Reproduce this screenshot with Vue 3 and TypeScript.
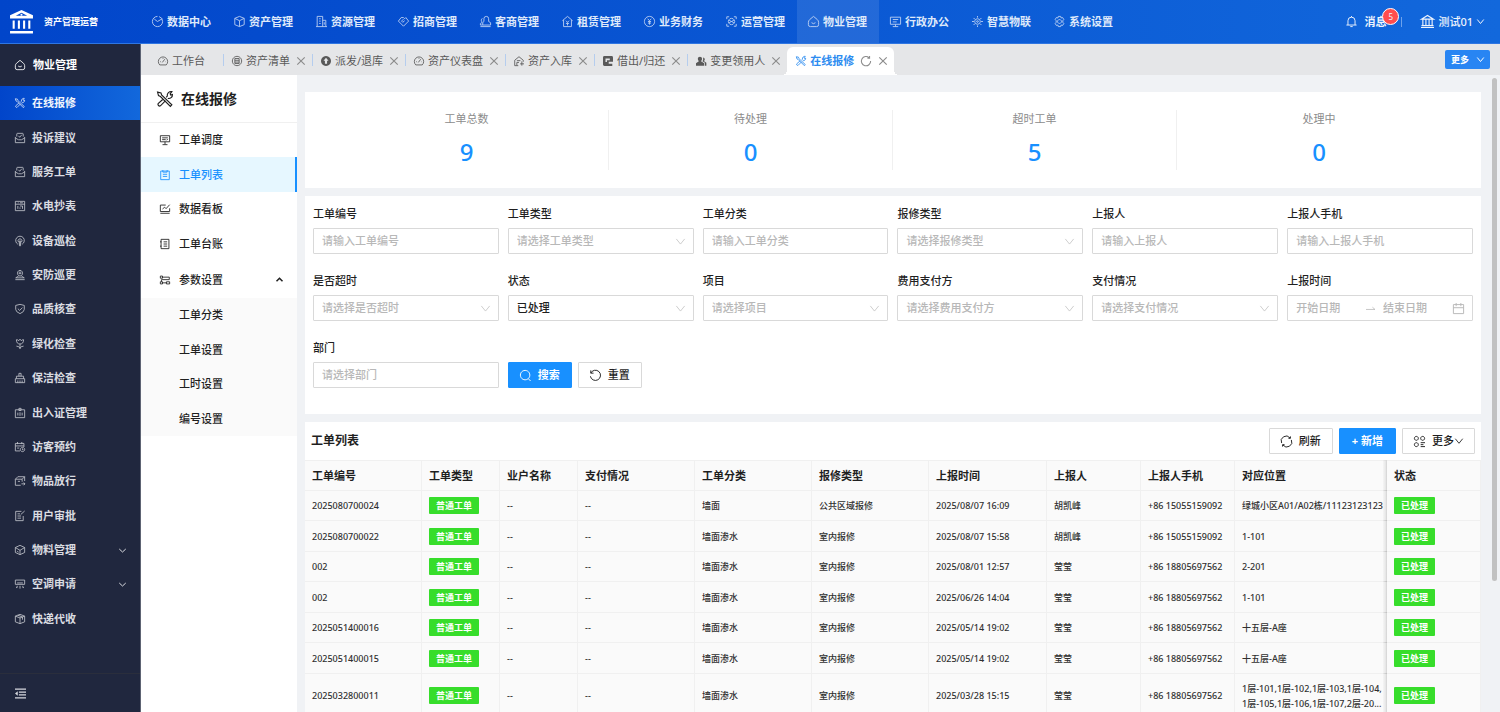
<script setup lang="ts">
import { ref } from 'vue'

interface MenuItem { icon: string; label: string; expandable?: boolean }
interface TabItem { icon: string; label: string; closable: boolean; solid?: boolean; active?: boolean }
interface Field { id: string; label: string; hint: string; kind: 'text' | 'select' | 'range'; value?: string }
interface Order { no: string; category: string; repair: string; time: string; person: string; phone: string; place: string }

const icons: Record<string, string> = {
  bank: 'M1.500 5.500 8 1.500l6.500 4zM1 14.500h14M3 6v6.500M6.300 6v6.500M9.700 6v6.500M13 6v6.500M1.500 12.500h13',
  pie: 'M8 1.500a6.500 6.500 0 1 0 6.500 6.500M8 8 4 5M8 8l6-3.500M10 1.700a6.500 6.500 0 0 1 4.500 6.300',
  cube: 'M8 1.500 14 4v8l-6 2.500L2 12V4zM2 4l6 3 6-3M8 7v7.500',
  building: 'M2.500 14.500v-13h7v13M9.500 6.500h4v8M1 14.500h14M5 4.500h2M5 7.500h2M5 10.500h2M11.500 9v3',
  tag: 'M8 14 1.500 7.500 5 3h3l1.500 1.500L11 3l3.500 4.500zM8 5 5.500 7.500 7 9l2.500-2',
  client: 'M6 8V4.500a3 3 0 0 1 6 0V8l2.500 1.500v3h-10v-3zM4 4a3 3 0 0 0 0 5L1.500 10.500v2h3M1.500 14.500h13',
  house: 'M1.500 7 8 1.500 14.500 7M3 6v8.500h10V6M6 7l2 2 2-2M8 9v4M6 10.500h4',
  coin: 'M8 1.500a6.500 6.500 0 1 0 .01 0M5.700 4.500 8 7l2.300-2.500M8 7v5M6 8h4M6 10h4',
  operate: 'M2 5V2h3M11 2h3v3M14 11v3h-3M5 14H2v-3M8 4a4 4 0 1 0 .01 0M5 6.500 11 9.500M11 6.500 5 9.500',
  estate: 'M3.200 5.500 8 1.500l4.800 4A5 5 0 0 1 14.500 9v3q0 2.500-2.500 2.500H4q-2.500 0-2.500-2.500V9a5 5 0 0 1 1.700-3.500M5.500 9.500q2.500 2.500 5 0',
  monitor: 'M1.500 2.500h13v9h-13zM8 11.500v3M4.500 14.500h7M4.500 5.500h7M4.500 8.500h5',
  iot: 'M8 4.500a3.500 3.500 0 1 0 .01 0M8 7a1 1 0 1 0 .01 0M8 1v2M8 13v2M1 8h2.500M12.500 8H15M3 3.500l2 2M11 10.500l2 2M13 3.500l-2 2M5 10.500l-2 2',
  gear: 'M8 5.500a2.500 2.500 0 1 0 .01 0M6.500 1.500h3l.5 2 2-.5 1.500 2.500-1.300 1.500v2l1.300 1.500-1.500 2.500-2-.5-.5 2h-3l-.5-2-2 .5-1.500-2.500 1.300-1.500V7L2.500 5.500 4 3l2 .5z',
  bell: 'M1.500 12.500h13M3.500 12.500V7a4.500 4.500 0 0 1 9 0v5.500M8 1v1.500M6.500 14.500h3',
  tools: 'M1.500 2 4.500 2.700 5 4.500 14 13 12.700 14.500 4 5.800 2.300 5zM9 6.500l1-1A3.500 3.500 0 0 1 14 1.500L12.500 3.500l.5 1 1.500-.5a3.300 3.300 0 0 1-4 3.500M6.500 8 2 12a1.500 1.500 0 0 0 2 2L8.500 9.500',
  mail: 'M3.500 6V2.500Q3.500 1.500 4.500 1.500h7q1 0 1 1V6M1.500 6.500v8h13v-8M1.500 8 6 10.500h4L14.500 8M6 5l1.500 2L10.500 3.500',
  meter: 'M1.500 1.500h13v13h-13zM1.500 5.500h13M5 3.500h1M8 3.500h4M5 8v4M8 10v2M8 8h3.500v4',
  patrol: 'M5 12.500A6 6 0 1 1 11 12.500M6 9.500A2.700 2.700 0 1 1 10 9.500M8 7v7M6.500 14.500h3M7 9h2v4H7z',
  guard: 'M8 1.500A3.500 4 0 1 0 8.010 1.500M6 5.500h4M8 3v4M6 9.500 2 12h12l-4-2.500M1.500 14.500h13',
  shield: 'M8 1.500 14 3v5.500q0 3.500-6 6-6-2.500-6-6V3zM5 7.500 7.500 10 11.500 6',
  flower: 'M8 8V15M8 8Q3 8 3 2q2-.5 3 1.500Q7 1.500 8 1.500t2 2Q11 1.500 13 2q0 6-5 6M3 11q4 0 5 3M13 11q-4 0-5 3',
  clean: 'M6.500 5.500v-4h3v4M3 9V5.500h10V9M1.500 9h13v5.500h-13zM5 11.500v3M8 11.500v3M11 11.500v3',
  pass: 'M1.500 3.500h13v11h-13zM6.500 1.500h3v3h-3zM5 7.500v4M8 7v5M11 7.500v4',
  visitor: 'M1.500 3h12v5M1.500 3v10.500H8M1.500 6.500h12M4.500 1v3M10.500 1v3M4 9.500h3M11.500 8.500a3 3 0 1 0 .01 0M11.500 10v2h1.500',
  goods: 'M11 9V5.500H1.500v8.500H9M1.500 5.500 5 2h9.500L11 5.500M14.500 2v6M5 8.500h3M10 12H15M13 10l2 2-2 2',
  audit: 'M12.500 8v6.500H2V1.500h8M4.500 5H8M4.500 8h5M4.500 11h5M9 6l5.500-5',
  box: 'M8 1.500 14.500 4.500v7L8 14.500 1.500 11.500v-7zM1.500 4.500 8 8.500l6.500-4M8 8.500v6M4 10l2 1',
  aircon: 'M1.500 2.500h13v6h-13zM4 6.500h8M4 10.500v2.500H2.500M8 10.500v4M12 10.500v2.500h1.500',
  parcel: 'M8 1.500 14.500 4v8L8 14.500 1.500 12V4zM1.500 4 8 6.500 14.500 4M8 6.500v8M5 2.700l6.500 2.500V9',
  gauge: 'M3.500 13.500a6.500 6.500 0 1 1 9 0zM7 10l3.500-4.500M4 9h1M11.500 9h.5M8 4v1',
  list: 'M8 1.500a6.500 6.500 0 1 0 .01 0M5 4.500h6v7H5zM5 7h6M5 9.500h6',
  store: 'M7 14.500H2V7L8 2l6 5v2M5 14v-4h3M12 8.500v6M9.500 12H15M5 7.500h5',
  dispatch: 'M1.500 2h13v8.500h-13zM4 5h8M4 7.500h5M10 8.500l2-2M8 10.500v3.500M4.500 14.500h7',
  orders: 'M2 2.500h12v12H2zM5 1v3h6V1M5 7h6M5 10h6',
  board: 'M9 2.500H1.500v9h13V7M4.500 8l3-2.500 2 2L14.500 2M1.500 14h13',
  ledger: 'M2.500 1.500h11v13h-11zM1 5h2M1 11h2M6 5h5M6 8h5M6 11h5',
  params: 'M1.500 2.500h3v3h-3zM4.500 4H14M1.500 10.500h3v3h-3zM4.500 12H10M10 10.500h4.500v3H10zM14 4v3.500H3v3',
  search: 'M7.500 1.500a6 6 0 1 0 .01 0M11.500 12l3 3',
  undo: 'M2 5a6.500 6.500 0 1 1-.5 4M2 1.500V5h3.500',
  refresh: 'M1.800 10A6.300 6.300 0 0 1 12.500 3.500M14.200 6A6.300 6.300 0 0 1 3.500 12.500M10.500 4h2.500V1.500M5.500 12H3v2.500',
  reload: 'M12.500 3.500a6.500 6.500 0 1 0 2 4.500M13 1v3H10',
  grid: 'M4 1.500a2.500 2.500 0 1 0 .01 0M12 1.500a2.500 2.500 0 1 0 .01 0M4 9.500a2.500 2.500 0 1 0 .01 0M9.500 9.500H15M9.500 12H13M9.500 14.500H15',
  down: 'M1.500 4 8 12l6.500-8',
  up: 'M2 11.500 8 5.500l6 6',
  close: 'M1.500 1.500l13 13M14.500 1.500l-13 13',
  swap: 'M1 9.500h14L11 6',
  calendar: 'M1.500 3h13v11.500h-13zM1.500 7h13M5 1v4M11 1v4',
  give: 'M8 1a7 7 0 1 0 .01 0M8 3.500l3.500 4H9.500V12h-3V7.500h-2z',
  lend: 'M3 1h10q2 0 2 2v6H9v3h5v3H3q-2 0-2-2V3q0-2 2-2M4.500 4.500v5h2V7h4V4.500z',
  people: 'M6.500 2a3 3 0 0 1 3 3q0 2-1.500 3.500L12.500 11v3.500H1V11l4-2.500Q3.500 7 3.500 5a3 3 0 0 1 3-3M11 3a2.700 2.700 0 0 1 1 5l3.500 2.500v4h-2V10.500L10 8.500Q11.500 6 11 3',
}

const topNav: MenuItem[] = [
  { icon: 'pie', label: '数据中心' }, { icon: 'cube', label: '资产管理' },
  { icon: 'building', label: '资源管理' }, { icon: 'tag', label: '招商管理' },
  { icon: 'client', label: '客商管理' }, { icon: 'house', label: '租赁管理' },
  { icon: 'coin', label: '业务财务' }, { icon: 'operate', label: '运营管理' },
  { icon: 'estate', label: '物业管理' }, { icon: 'monitor', label: '行政办公' },
  { icon: 'iot', label: '智慧物联' }, { icon: 'gear', label: '系统设置' },
]

const sideNav: MenuItem[] = [
  { icon: 'tools', label: '在线报修' }, { icon: 'mail', label: '投诉建议' },
  { icon: 'mail', label: '服务工单' }, { icon: 'meter', label: '水电抄表' },
  { icon: 'patrol', label: '设备巡检' }, { icon: 'guard', label: '安防巡更' },
  { icon: 'shield', label: '品质核查' }, { icon: 'flower', label: '绿化检查' },
  { icon: 'clean', label: '保洁检查' }, { icon: 'pass', label: '出入证管理' },
  { icon: 'visitor', label: '访客预约' }, { icon: 'goods', label: '物品放行' },
  { icon: 'audit', label: '用户审批' }, { icon: 'box', label: '物料管理', expandable: true },
  { icon: 'aircon', label: '空调申请', expandable: true }, { icon: 'parcel', label: '快递代收' },
]

const tabs: TabItem[] = [
  { icon: 'gauge', label: '工作台', closable: false },
  { icon: 'list', label: '资产清单', closable: true },
  { icon: 'give', label: '派发/退库', closable: true, solid: true },
  { icon: 'gauge', label: '资产仪表盘', closable: true },
  { icon: 'store', label: '资产入库', closable: true },
  { icon: 'lend', label: '借出/归还', closable: true, solid: true },
  { icon: 'people', label: '变更领用人', closable: true, solid: true },
  { icon: 'tools', label: '在线报修', closable: true, active: true },
]

const subNav: MenuItem[] = [
  { icon: 'dispatch', label: '工单调度' }, { icon: 'orders', label: '工单列表' },
  { icon: 'board', label: '数据看板' }, { icon: 'ledger', label: '工单台账' },
]
const paramNav: string[] = ['工单分类', '工单设置', '工时设置', '编号设置']
const paramsOpen = ref(true)

const stats = [
  { label: '工单总数', value: 9 }, { label: '待处理', value: 0 },
  { label: '超时工单', value: 5 }, { label: '处理中', value: 0 },
]

const fields = ref<Field[]>([
  { id: 'order-no', label: '工单编号', hint: '请输入工单编号', kind: 'text' },
  { id: 'order-type', label: '工单类型', hint: '请选择工单类型', kind: 'select' },
  { id: 'order-class', label: '工单分类', hint: '请输入工单分类', kind: 'text' },
  { id: 'repair-type', label: '报修类型', hint: '请选择报修类型', kind: 'select' },
  { id: 'reporter', label: '上报人', hint: '请输入上报人', kind: 'text' },
  { id: 'reporter-phone', label: '上报人手机', hint: '请输入上报人手机', kind: 'text' },
  { id: 'overtime', label: '是否超时', hint: '请选择是否超时', kind: 'select' },
  { id: 'status', label: '状态', hint: '请选择状态', kind: 'select', value: '已处理' },
  { id: 'project', label: '项目', hint: '请选择项目', kind: 'select' },
  { id: 'payer', label: '费用支付方', hint: '请选择费用支付方', kind: 'select' },
  { id: 'payment', label: '支付情况', hint: '请选择支付情况', kind: 'select' },
  { id: 'report-time', label: '上报时间', hint: '开始日期', kind: 'range' },
  { id: 'department', label: '部门', hint: '请选择部门', kind: 'text' },
])

const columns: string[] = ['工单编号', '工单类型', '业户名称', '支付情况', '工单分类', '报修类型', '上报时间', '上报人', '上报人手机', '对应位置', '状态']

const hu = '胡凯峰'
const ying = '莹莹'
const huPhone = '+86 15055159092'
const yingPhone = '+86 18805697562'
const orders: Order[] = [
  { no: '2025080700024', category: '墙面', repair: '公共区域报修', time: '2025/08/07 16:09', person: hu, phone: huPhone, place: '绿城小区A01/A02栋/11123123123' },
  { no: '2025080700022', category: '墙面渗水', repair: '室内报修', time: '2025/08/07 15:58', person: hu, phone: huPhone, place: '1-101' },
  { no: '002', category: '墙面渗水', repair: '室内报修', time: '2025/08/01 12:57', person: ying, phone: yingPhone, place: '2-201' },
  { no: '002', category: '墙面渗水', repair: '室内报修', time: '2025/06/26 14:04', person: ying, phone: yingPhone, place: '1-101' },
  { no: '2025051400016', category: '墙面渗水', repair: '室内报修', time: '2025/05/14 19:02', person: ying, phone: yingPhone, place: '十五层-A座' },
  { no: '2025051400015', category: '墙面渗水', repair: '室内报修', time: '2025/05/14 19:02', person: ying, phone: yingPhone, place: '十五层-A座' },
  { no: '2025032800011', category: '墙面渗水', repair: '室内报修', time: '2025/03/28 15:15', person: ying, phone: yingPhone, place: '1层-101,1层-102,1层-103,1层-104,\n1层-105,1层-106,1层-107,2层-20...' },
]
</script>

<template>
  <div class="app">
    <header class="topbar">
      <div class="brand">
        <svg class="brand-logo" viewBox="0 0 24 24">
          <path d="M12 1 23 6v3H1V6zM1 21h22v2.500H1zM3.500 11h2v8h-2zM8.500 11h2v8h-2zM13.500 11h2v8h-2zM18.500 11h2v8h-2z" />
          <path class="brand-cut" d="M12 3.500 17.500 6.500h-11z" />
          <circle cx="12" cy="5.500" r="1" />
        </svg>
        <span class="brand-name">资产管理运营</span>
      </div>
      <nav class="top-nav">
        <a v-for="item in topNav" :key="item.label" href="#" :class="['top-link', { active: item.label === '物业管理' }]">
          <svg class="icon" viewBox="1 1 14 14"><path :d="icons[item.icon]" /></svg>
          <span>{{ item.label }}</span>
        </a>
      </nav>
      <div class="account">
        <button class="message">
          <svg class="icon bell" viewBox="1 1 14 14"><path :d="icons.bell" /></svg>
          <span>消息</span>
          <span class="badge">5</span>
        </button>
        <button class="user">
          <svg class="icon user-icon" viewBox="1 1 14 14"><path :d="icons.bank" /></svg>
          <span>测试01</span>
          <svg class="icon chevron" viewBox="1 1 14 14"><path :d="icons.down" /></svg>
        </button>
      </div>
    </header>

    <div class="body">
      <aside class="sidebar">
        <div class="side-head">
          <svg class="icon" viewBox="1 1 14 14"><path :d="icons.estate" /></svg>
          <span>物业管理</span>
        </div>
        <ul class="side-list">
          <li v-for="(item, i) in sideNav" :key="item.label">
            <a href="#" :class="['side-link', { active: i === 0 }]">
              <svg class="icon" viewBox="1 1 14 14"><path :d="icons[item.icon]" /></svg>
              <span>{{ item.label }}</span>
              <svg v-if="item.expandable" class="icon side-arrow" viewBox="1 1 14 14"><path d="M1.500 5 8 11l6.500-6" /></svg>
            </a>
          </li>
        </ul>
        <button class="collapse" aria-label="收起菜单">
          <svg viewBox="1 1 14 14"><path d="M1 1.500h14v1.600H1zM6 5.300h9v1.600H6zM6 9h9v1.600H6zM1 12.900h14v1.600H1zM4.500 5v6L1 8z" /></svg>
        </button>
      </aside>

      <div class="workspace">
        <div class="tabbar">
          <div v-for="tab in tabs" :key="tab.label" :class="['tab', { active: tab.active, home: !tab.closable }]">
            <svg :class="['icon', { solid: tab.solid }]" viewBox="1 1 14 14"><path fill-rule="evenodd" :d="icons[tab.icon]" /></svg>
            <span>{{ tab.label }}</span>
            <button v-if="tab.active" class="tab-btn tab-reload" aria-label="刷新标签">
              <svg class="icon" viewBox="1 1 14 14"><path :d="icons.reload" /></svg>
            </button>
            <button v-if="tab.closable" class="tab-btn" aria-label="关闭标签">
              <svg class="icon" viewBox="1 1 14 14"><path :d="icons.close" /></svg>
            </button>
          </div>
          <button class="tab-more">更多<svg class="icon" viewBox="1 1 14 14"><path :d="icons.down" /></svg></button>
        </div>

        <div class="panes">
          <aside class="subpanel">
            <h1 class="sub-title">
              <svg class="icon" viewBox="1 1 14 14"><path :d="icons.tools" /></svg>
              <span>在线报修</span>
            </h1>
            <ul class="sub-list">
              <li v-for="item in subNav" :key="item.label">
                <a href="#" :class="['sub-link', { active: item.label === '工单列表' }]">
                  <svg class="icon" viewBox="1 1 14 14"><path :d="icons[item.icon]" /></svg>
                  <span>{{ item.label }}</span>
                </a>
              </li>
            </ul>
            <button class="sub-link sub-toggle" :aria-expanded="paramsOpen" @click="paramsOpen = !paramsOpen">
              <svg class="icon" viewBox="1 1 14 14"><path :d="icons.params" /></svg>
              <span>参数设置</span>
              <svg class="icon sub-arrow" viewBox="1 1 14 14"><path :d="icons.up" /></svg>
            </button>
            <ul v-if="paramsOpen" class="sub-list nested">
              <li v-for="label in paramNav" :key="label"><a href="#" class="sub-link">{{ label }}</a></li>
            </ul>
          </aside>

          <main class="content">
            <section class="card stats">
              <div v-for="stat in stats" :key="stat.label" class="stat">
                <span class="stat-label">{{ stat.label }}</span>
                <span class="stat-value">{{ stat.value }}</span>
              </div>
            </section>

            <form class="card filters" @submit.prevent>
              <div v-for="field in fields" :key="field.id" class="field">
                <label :for="field.id">{{ field.label }}</label>
                <div v-if="field.kind === 'range'" class="control range">
                  <input :id="field.id" type="text" placeholder="开始日期" />
                  <svg class="icon swap" viewBox="1 1 14 14"><path :d="icons.swap" /></svg>
                  <input type="text" placeholder="结束日期" aria-label="结束日期" />
                  <svg class="icon" viewBox="1 1 14 14"><path :d="icons.calendar" /></svg>
                </div>
                <div v-else-if="field.kind === 'select'" class="control">
                  <select :id="field.id" :class="{ empty: !field.value }">
                    <option>{{ field.value ?? field.hint }}</option>
                  </select>
                  <svg class="icon caret" viewBox="1 1 14 14"><path :d="icons.down" /></svg>
                </div>
                <div v-else class="control">
                  <input :id="field.id" v-model="field.value" type="text" :placeholder="field.hint" />
                </div>
              </div>
              <div class="form-actions">
                <button type="submit" class="btn primary"><svg class="icon" viewBox="1 1 14 14"><path :d="icons.search" /></svg>搜索</button>
                <button type="reset" class="btn"><svg class="icon" viewBox="1 1 14 14"><path :d="icons.undo" /></svg>重置</button>
              </div>
            </form>

            <section class="card orders">
              <div class="orders-head">
                <h2>工单列表</h2>
                <div class="orders-actions">
                  <button class="btn"><svg class="icon" viewBox="1 1 14 14"><path :d="icons.refresh" /></svg>刷新</button>
                  <button class="btn primary add">+ 新增</button>
                  <button class="btn"><svg class="icon" viewBox="1 1 14 14"><path :d="icons.grid" /></svg><span class="more-label">更多<svg class="icon" viewBox="1 1 14 14"><path :d="icons.down" /></svg></span></button>
                </div>
              </div>
              <table>
                <colgroup>
                  <col class="c-wide" /><col class="c-slim" /><col class="c-slim" /><col class="c-wide" /><col class="c-wide" /><col class="c-wide" />
                  <col class="c-time" /><col class="c-mid" /><col class="c-mid" /><col class="c-place" /><col class="c-mid" />
                </colgroup>
                <thead>
                  <tr><th v-for="col in columns" :key="col">{{ col }}</th></tr>
                </thead>
                <tbody>
                  <tr v-for="(order, i) in orders" :key="i">
                    <td>{{ order.no }}</td>
                    <td><span class="pill">普通工单</span></td>
                    <td>--</td>
                    <td>--</td>
                    <td>{{ order.category }}</td>
                    <td>{{ order.repair }}</td>
                    <td>{{ order.time }}</td>
                    <td>{{ order.person }}</td>
                    <td>{{ order.phone }}</td>
                    <td>{{ order.place }}</td>
                    <td><span class="pill">已处理</span></td>
                  </tr>
                </tbody>
              </table>
            </section>
            <div class="scroll-thumb"></div>
          </main>
        </div>
      </div>
    </div>
  </div>
</template>

<style>
html, body { margin: 0; height: 100%; overflow: hidden; }
</style>

<style scoped>
.app, .app * { box-sizing: border-box; }
.app {
  display: flex;
  flex-direction: column;
  height: 100vh;
  overflow: hidden;
  font-family: "Noto Sans", "Noto Sans CJK SC", sans-serif;
  font-size: 11px;
  line-height: 18px;
  color: #1f1f1f;
}
button, input, select { font: inherit; color: inherit; margin: 0; padding: 0; border: 0; background: none; }
button { cursor: pointer; }
a { color: inherit; text-decoration: none; }
ul { list-style: none; margin: 0; padding: 0; }
h1, h2 { margin: 0; }
.icon { width: 11px; height: 11px; flex: none; fill: none; stroke: currentColor; stroke-width: 1.2; overflow: visible; }
.icon.solid { fill: currentColor; stroke: none; }

.topbar {
  display: flex;
  height: 44px;
  flex: none;
  color: #fff;
  font-weight: 700;
  background: linear-gradient(90deg, #0145ca, #1268dc);
  border-bottom: 1px solid #2f76e2;
}
.brand { display: flex; align-items: center; width: 141px; padding-left: 9px; gap: 10px; flex: none; }
.brand-logo { width: 25px; height: 25px; fill: #fff; }
.brand-cut { fill: #0248cc; }
.brand-name { font-size: 9px; font-weight: 700; }
.top-nav { display: flex; flex: none; }
.top-link { display: flex; align-items: center; gap: 4px; padding: 0 12px 0 11px; white-space: nowrap; color: #dfe9fa; }
.top-link .icon { opacity: .8; }
.top-link.active { background: rgba(255, 255, 255, .1); }
.account { display: flex; align-items: center; margin-left: auto; padding-right: 16px; color: #eef4fd; }
.message { display: flex; align-items: center; gap: 7px; position: relative; padding-right: 15px; border-right: 1px solid transparent; }
.message::after { content: ""; position: absolute; right: -1px; top: 4px; height: 10px; width: 1px; background: #6da2ec; }
.badge {
  position: absolute; left: 36px; top: -5px; width: 17px; height: 17px; border: 1px solid #fff; border-radius: 50%;
  background: #ff4d4f; font-size: 8px; line-height: 15px; text-align: center; font-weight: 400;
}
.user { display: flex; align-items: center; gap: 4px; margin-left: 19px; font-weight: 500; }
.user-icon { width: 13px; height: 13px; }
.chevron { width: 7px; height: 7px; stroke-width: 2; }

.body { display: flex; flex: 1; min-height: 0; }
.sidebar { display: flex; flex-direction: column; width: 141px; flex: none; background: #20273e; border-right: 1px solid #5d6373; color: #dadce1; font-weight: 700; }
.side-head { display: flex; align-items: center; gap: 8px; height: 42px; flex: none; padding-left: 15px; font-weight: 700; color: #fff; }
.side-list { display: flex; flex-direction: column; flex: 1; padding-bottom: 37px; }
.side-list li { display: flex; flex: 1; min-height: 30px; }
.side-link { display: flex; flex: 1; align-items: center; gap: 7px; padding: 0 14px 0 15px; }
.side-link .icon, .side-head .icon { width: 10px; height: 10px; }
.side-link > .icon:first-child { opacity: .85; }
.side-link.active { background: linear-gradient(90deg, #0145ca, #1268dc); color: #f0f5fd; }
.side-link .side-arrow { width: 7px; height: 7px; margin-left: auto; stroke-width: 2; }
.collapse { height: 39px; flex: none; border-top: 1px solid #2a2e3c; padding-left: 15px; text-align: left; }
.collapse svg { display: block; width: 11px; height: 11px; fill: #d5d8de; }

.workspace { display: flex; flex-direction: column; flex: 1; min-width: 0; }
.tabbar { display: flex; height: 31px; flex: none; background: #e5e6e8; padding-left: 8px; color: #595959; }
.tab { position: relative; display: flex; align-items: center; gap: 4px; padding: 3px 7px 0 9px; white-space: nowrap; }
.tab > .icon { width: 10px; height: 10px; }
.tab.home { padding-right: 18px; }
.tab:not(:first-child)::before { content: ""; position: absolute; left: 0; top: 10px; width: 1px; height: 12px; background: #b5cdee; }
.tab-btn { display: flex; margin-left: 3px; color: #8c8c8c; }
.tab-btn .icon { width: 8px; height: 8px; stroke-width: 2; }
.tab.active { margin-top: 3px; padding-top: 0; background: #fff; border-radius: 6px 6px 0 0; color: #2d8cf0; font-weight: 700; }
.tab.tab.active::before, .tab.active::after { content: ""; position: absolute; top: auto; bottom: 0; width: 5px; height: 5px; }
.tab.tab.active::before { left: -5px; background: radial-gradient(circle at 0 0, transparent 5px, #fff 5px); }
.tab.active::after { right: -5px; background: radial-gradient(circle at 100% 0, transparent 5px, #fff 5px); }
.tab.active .tab-reload .icon { width: 10px; height: 10px; stroke-width: 1.5; }
.tab-reload + .tab-btn { margin-left: 4px; }
.tab-more {
  display: flex; align-items: center; gap: 8px; align-self: flex-start; margin: 6px 10px 0 auto; height: 19px; padding: 0 6px;
  background: #2885f3; color: #fff; border-radius: 2px; font-size: 9px; font-weight: 700;
}
.tab-more .icon { width: 7px; height: 7px; stroke-width: 2; }

.panes { display: flex; flex: 1; min-height: 0; background: #f0f2f5; }
.subpanel { width: 156px; flex: none; background: #fff; }
.sub-title { display: flex; align-items: center; gap: 8px; height: 48px; padding-left: 16px; font-size: 14px; font-weight: 700; border-bottom: 1px solid #f0f0f0; }
.sub-title .icon { width: 16px; height: 16px; stroke-width: 1; }
.sub-link { display: flex; align-items: center; gap: 9px; width: 100%; height: 34px; padding-left: 19px; font-weight: 500; }
.sub-link .icon { width: 10px; height: 10px; }
li:nth-child(even) > .sub-link { height: 35px; }
.sub-link.active { background: #e6f7ff; color: #1890ff; border-right: 2px solid #1890ff; }
.sub-toggle { height: 37px; padding-right: 14px; }
.sub-link .sub-arrow { width: 7px; height: 7px; margin-left: auto; stroke-width: 3; }
.nested { background: #fafafa; }
.nested .sub-link { padding-left: 38px; }

.content { position: relative; display: flex; flex-direction: column; gap: 8px; flex: 1; min-width: 0; padding: 17px 19px 0 8px; overflow: hidden; }
.card { flex: none; background: #fff; }
.stats { display: grid; grid-template-columns: repeat(4, 1fr); padding: 18px 20px; }
.stat { display: flex; flex-direction: column; align-items: center; gap: 8px; height: 60px; border-right: 1px solid #f0f0f0; }
.stat:last-child { border-right: 0; }
.stat-label { color: #8c8c8c; }
.stat-value { font-size: 24px; line-height: 32px; font-weight: 500; color: #1890ff; }

.filters { display: grid; grid-template-columns: repeat(6, 1fr); gap: 18px 9px; padding: 9px 8px 26px; }
.field { display: flex; flex-direction: column; gap: 5px; min-width: 0; font-weight: 500; }
.control { position: relative; display: flex; align-items: center; height: 26px; border: 1px solid #d9d9d9; border-radius: 1px; background: #fff; }
.control input, .control select { flex: 1; width: 100%; min-width: 0; height: 24px; padding: 0 8px; outline: 0; appearance: none; }
.control input { padding-bottom: 2px; }
.control input::placeholder { color: #b8b8b8; opacity: 1; }
.control select.empty { color: #b8b8b8; }
.caret { position: absolute; right: 8px; top: 8px; width: 9px; height: 9px; color: #bfbfbf; pointer-events: none; }
.range { color: #b8b8b8; padding-right: 8px; }
.range .swap { width: 9px; height: 9px; }
.form-actions { display: flex; align-items: flex-end; gap: 6px; grid-column: span 2; }
.btn {
  display: flex; align-items: center; gap: 7px; height: 26px; padding: 0 11px; border: 1px solid #d9d9d9; border-radius: 1px;
  background: #fff; white-space: nowrap; font-weight: 500;
}
.btn.primary { border-color: #1890ff; background: #1890ff; color: #fff; font-weight: 700; }
.btn.add { padding: 0 12px; }

.orders-head { display: flex; align-items: center; height: 38px; padding: 0 6px; }
.orders-head h2 { font-size: 12px; font-weight: 700; }
.orders-actions { display: flex; gap: 6px; margin-left: auto; }
.more-label { display: flex; align-items: center; gap: 1px; }
.more-label .icon { width: 8px; height: 8px; stroke-width: 1.5; }
table { width: 100%; table-layout: fixed; border-collapse: separate; border-spacing: 0; }
.c-wide { width: 117px; }
.c-slim { width: 78px; }
.c-time { width: 118px; }
.c-mid { width: 94px; }
.c-place { width: 152px; }
th, td {
  height: 30px; padding: 0 0 0 7px; text-align: left; vertical-align: middle; background: #fafafa; overflow: hidden;
  border-right: 1px solid #f0f0f0; border-bottom: 1px solid #f0f0f0; white-space: pre;
}
th { height: 31px; font-weight: 700; border-top: 1px solid #f0f0f0; }
td { font-size: 9px; line-height: 15px; color: #303030; font-weight: 500; }
tr:nth-child(even) td { height: 31px; }
tr:last-child td { height: 44px; }
th:last-child, td:last-child { position: relative; overflow: visible; }
th:last-child::before, td:last-child::before {
  content: ""; position: absolute; top: -1px; bottom: -1px; left: -4px; width: 4px;
  background: linear-gradient(90deg, rgba(0, 0, 0, .02), rgba(0, 0, 0, .11));
}
.pill { display: inline-block; padding: 1px 7px; border-radius: 1px; background: #37dd2b; color: #fff; font-weight: 700; }
.scroll-thumb { position: absolute; right: 3px; top: 3px; width: 5px; height: 79%; border-radius: 3px; background: #c1c1c1; }
</style>
